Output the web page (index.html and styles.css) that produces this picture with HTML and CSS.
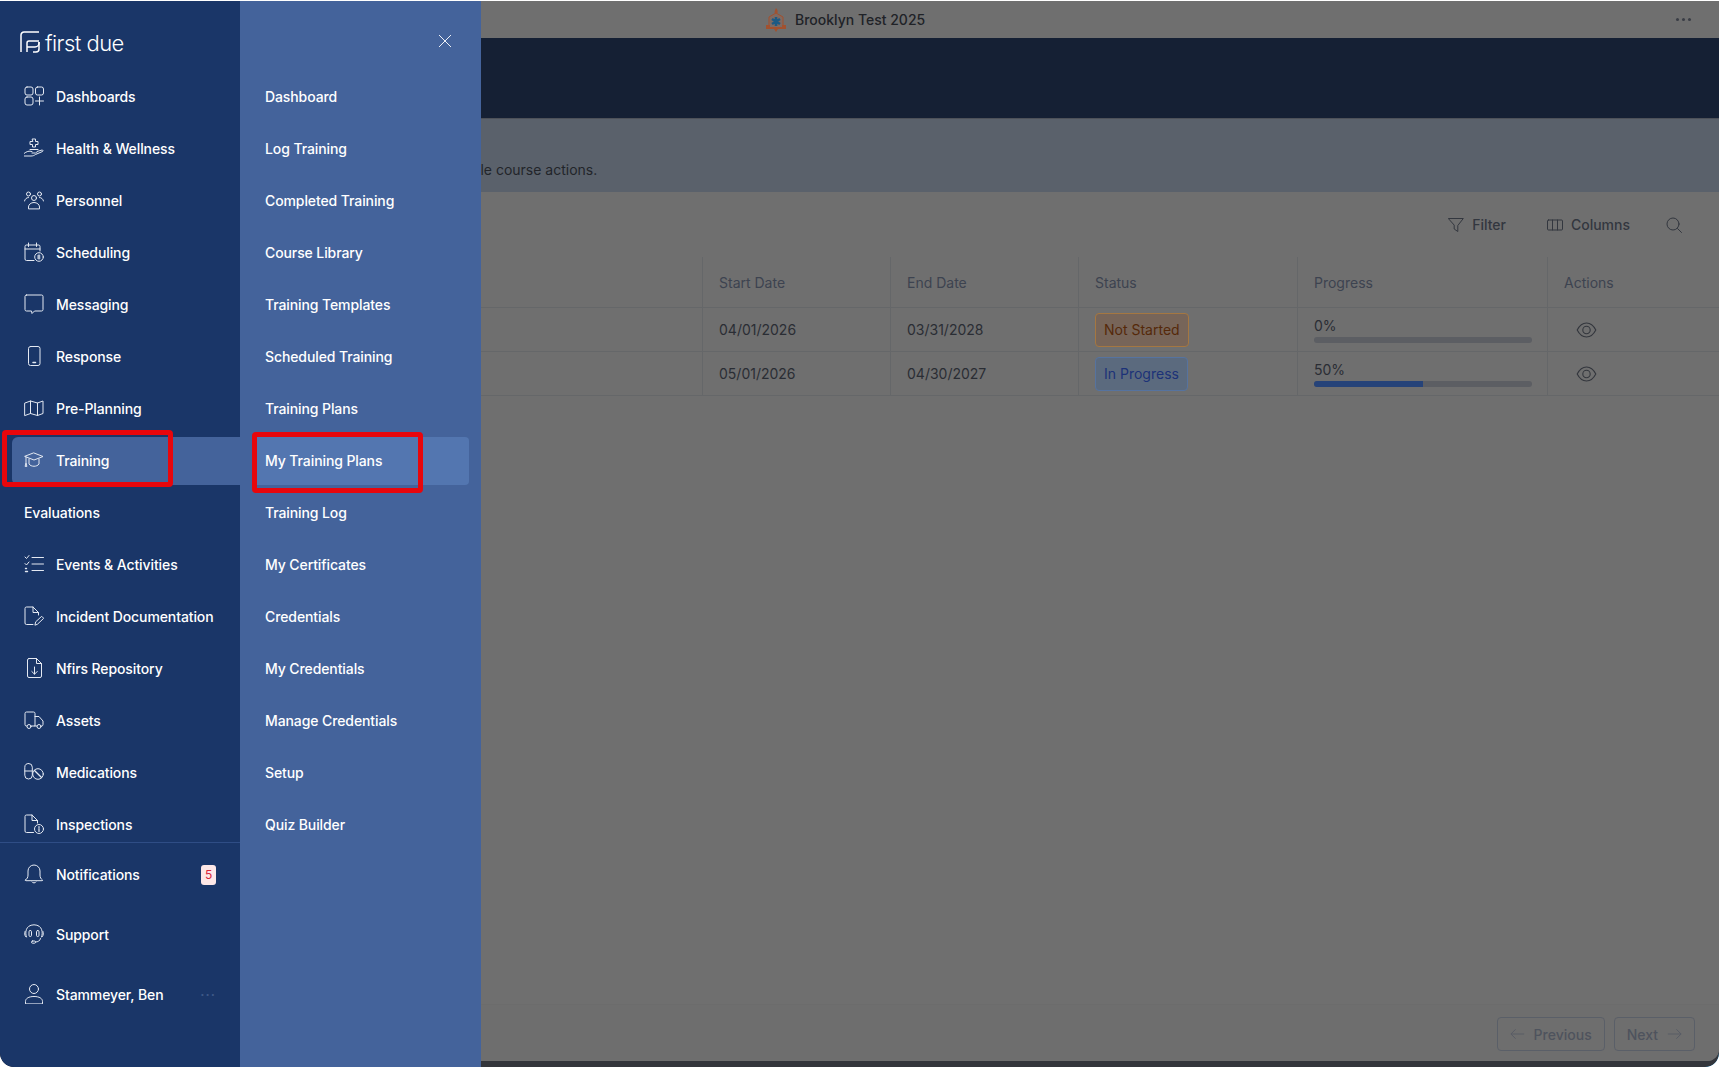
FILE: index.html
```html
<!DOCTYPE html>
<html lang="en">
<head>
    <meta charset="UTF-8">
    <meta name="viewport" content="width=device-width, initial-scale=1.0">
    <title>My Training Plans</title>
    <link rel="stylesheet" href="styles.css">
</head>
<body>
<div class="window">
    <aside class="sidebar">
        <div class="logo">
            <svg class="logo-mark" viewBox="0 0 20 22" fill="none" stroke="currentColor" stroke-width="1.5">
                <path d="M1 21V4a3 3 0 0 1 3-3h15"/>
                <path d="M7 21V12a2 2 0 0 1 2-2h10"/>
                <path d="M7 16h8a4 4 0 0 0 4-4v-1"/>
                <path d="M13 21h3a3 3 0 0 0 3-3v-7"/>
            </svg>
            <span class="logo-text">first due</span>
        </div>
        <nav class="side-nav">
            <a class="side-link">
                <svg class="icon" viewBox="0 0 20 20"><rect x="1" y="1" width="8" height="8" rx="2"/><rect x="11.5" y="1" width="8" height="8" rx="2"/><rect x="1" y="11" width="8" height="8" rx="2"/><path d="M15.5 11v8M11.5 15h8"/></svg>
                Dashboards
            </a>
            <a class="side-link">
                <svg class="icon" viewBox="0 0 20 20"><path d="M8.5 1h3v2.5H14v3h-2.500V9h-3V6.500H6v-3h2.500z"/><path d="M6 11.500h8M0 18h7c2 0 3-.5 4.500-1.500l7-3c1-.5.5-1.500-.5-1.500l-5 1.500c0 1-.5 1.500-1.500 1.500H8"/><path d="M0 15.500c2.500-2 5-3 8-2"/></svg>
                Health &amp; Wellness
            </a>
            <a class="side-link">
                <svg class="icon" viewBox="0 0 20 20"><circle cx="10" cy="8" r="2.500"/><circle cx="4.500" cy="4" r="2"/><circle cx="15.500" cy="4" r="2"/><path d="M4.500 18.500V17c0-2.500 2.500-4.500 5.500-4.500s5.500 2 5.500 4.500v1.500z"/><path d="M.5 11c.5-2 2-3.500 4-3.500M19.500 11c-.5-2-2-3.500-4-3.500"/></svg>
                Personnel
            </a>
            <a class="side-link">
                <svg class="icon" viewBox="0 0 20 20"><path d="M10 18.500H2.500a1.500 1.500 0 0 1-1.500-1.500V4.500A1.500 1.500 0 0 1 2.500 3h12A1.500 1.500 0 0 1 16 4.500V9"/><path d="M1 7h15M4.500 1v3.500M12.500 1v3.500"/><circle cx="15" cy="15" r="4.300"/><path d="M15 12.800v4.400M13.500 14h2.500M13.500 16h2.500"/></svg>
                Scheduling
            </a>
            <a class="side-link">
                <svg class="icon" viewBox="0 0 20 20"><path d="M2.500 1h15A1.500 1.500 0 0 1 19 2.500v13a1.500 1.500 0 0 1-1.500 1.500h-7l-2.500 2.500-.5-2.500h-5A1.500 1.500 0 0 1 1 15.500v-13A1.500 1.500 0 0 1 2.500 1z"/></svg>
                Messaging
            </a>
            <a class="side-link">
                <svg class="icon" viewBox="0 0 20 20"><rect x="4.500" y=".5" width="11.500" height="19" rx="2"/><path d="M9 16.500h2.500" stroke-width="1.500"/></svg>
                Response
            </a>
            <a class="side-link">
                <svg class="icon" viewBox="0 0 20 20"><path d="M1 5l5.500-2 7 2 5.500-2v12.500l-5.500 2-7-2-5.500 2z"/><path d="M6.500 3v12.500M13.500 5v12.500"/></svg>
                Pre-Planning
            </a>
            <a class="side-link active">
                <svg class="icon" viewBox="0 0 20 20"><path d="M10 3l9 3.500-9 3.500-9-3.500z"/><path d="M5 9v5c2 3 8 3 10 0V9"/><path d="M2 7v6M1.200 16l.8-3 .8 3z"/></svg>
                Training
                <span class="red-box"></span>
            </a>
            <a class="side-link">Evaluations</a>
            <a class="side-link">
                <svg class="icon" viewBox="0 0 20 20"><path d="M1 3l1.500 1.500L5 1.500M1 9.500l1.500 1.500L5 8"/><path d="M8 3.500h11.500M8 10h11.500M8 16.500h11.500"/><path d="M1.500 14.500h1M1.500 17.500h2" stroke-width="1.400"/></svg>
                Events &amp; Activities
            </a>
            <a class="side-link">
                <svg class="icon" viewBox="0 0 20 20"><path d="M9 18.500H2.500A1.500 1.500 0 0 1 1 17V2.500A1.500 1.500 0 0 1 2.500 1H9l5.500 5.500V9"/><path d="M9 1v5.500h5.500"/><path d="M11 18.800l.7-3 6-5.500 2 2-6 5.700z"/></svg>
                Incident Documentation
            </a>
            <a class="side-link">
                <svg class="icon" viewBox="0 0 20 20"><path d="M5 .5h7.500l5 5v12.500a1.500 1.500 0 0 1-1.500 1.500H5A1.500 1.500 0 0 1 3.500 18V2A1.500 1.500 0 0 1 5 .5z"/><path d="M12.500.5v5h5"/><path d="M10.500 9v7M7.800 13.500l2.700 2.700 2.700-2.700"/></svg>
                Nfirs Repository
            </a>
            <a class="side-link">
                <svg class="icon" viewBox="0 0 20 20"><path d="M3 16H2.500A1.500 1.500 0 0 1 1 14.500v-11A1.500 1.500 0 0 1 2.500 2H9.500A1.500 1.500 0 0 1 11 3.500V16H7"/><path d="M11 6.500h4l4 4.500v3.500a1.500 1.500 0 0 1-1.500 1.500H17M13 16h-2"/><circle cx="5" cy="16.500" r="2"/><circle cx="15" cy="16.500" r="2"/></svg>
                Assets
            </a>
            <a class="side-link">
                <svg class="icon" viewBox="0 0 20 20"><rect x=".8" y="1.500" width="7.500" height="15.500" rx="3.750"/><path d="M.8 9h7.500"/><circle cx="14" cy="12" r="5.300"/><path d="M10.500 8.500l7 7" stroke-width="1.400"/></svg>
                Medications
            </a>
            <a class="side-link">
                <svg class="icon" viewBox="0 0 20 20"><path d="M9.500 18.500H2.500A1.500 1.500 0 0 1 1 17V2.500A1.500 1.500 0 0 1 2.500 1H8l5.500 5.500V9"/><path d="M8 1v5.500h5.500"/><circle cx="15" cy="15" r="4.500"/><path d="M15 14.500v3M15 12.500v1" stroke-width="1.200"/></svg>
                Inspections
            </a>
        </nav>
        <div class="side-bottom">
            <a class="bottom-link">
                <svg class="icon" viewBox="0 0 20 20"><path d="M1.500 16c1.500-1 2.500-2.500 2.500-5V7a6 6 0 0 1 12 0v4c0 2.500 1 4 2.500 5a.5.5 0 0 1-.5.700H2a.5.5 0 0 1-.5-.7z"/><path d="M8 18c.5 1.300 3.500 1.300 4 0" /></svg>
                Notifications
                <span class="badge-count">5</span>
            </a>
            <a class="bottom-link">
                <svg class="icon" viewBox="0 0 20 20"><path d="M2.500 13C1 9.500 1 1 10 .8 19 1 19 9.500 17.500 13"/><path d="M1 7.500C.5 9 .5 11 1.500 12.500M19 7.500c.5 1.500.5 3.500-.5 5"/><rect x="5" y="6.500" width="2.500" height="6" rx="1.200"/><rect x="12.500" y="6.500" width="2.500" height="6" rx="1.200"/><path d="M16.500 14.500c-.5 2.500-2.500 3.500-5 3.500"/><rect x="7.500" y="17" width="4" height="2.200" rx="1"/></svg>
                Support
            </a>
            <a class="bottom-link">
                <svg class="icon" viewBox="0 0 20 20"><circle cx="10" cy="5" r="4.500"/><path d="M1.500 19.500v-2c0-3 3-5 8.500-5s8.500 2 8.500 5v2z"/></svg>
                Stammeyer, Ben
                <span class="more-dots">&middot;&middot;&middot;</span>
            </a>
        </div>
    </aside>

    <div class="main-frame">
        <main class="main">
            <header class="topbar">
                <svg class="brand-mark" viewBox="0 0 22 24">
                    <path d="M11 0c2 2 2 4 1 6h-2C9 4 10 2 11 0z" fill="#a2512f"/>
                    <path d="M11 5l7 4v11H4V9z" fill="#7f6a62" stroke="#a2512f" stroke-width="1"/>
                    <path d="M1 17h4v2h12v-2h4v4H1z" fill="#a2512f"/>
                    <path d="M11 9v9M7 11l8 5M15 11l-8 5" stroke="#1d5a84" stroke-width="2.600"/>
                    <path d="M9 21h4l-2 3z" fill="#a2512f"/>
                </svg>
                <span class="brand-name">Brooklyn Test 2025</span>
                <span class="top-dots"><i></i><i></i><i></i></span>
            </header>
            <div class="page-head"></div>
            <div class="banner">
                <p>Track progress and access available course actions.</p>
            </div>
            <div class="toolbar">
                <a class="tool">
                    <svg class="tool-icon" viewBox="0 0 16 16"><path d="M.7 1.500h14.600L9.800 8.500v6L6.200 12V8.500z"/></svg>
                    Filter
                </a>
                <a class="tool">
                    <svg class="tool-icon" viewBox="0 0 16 16"><rect x=".5" y="3" width="15" height="10" rx="1"/><path d="M5.500 3v10M10.500 3v10"/></svg>
                    Columns
                </a>
                <svg class="tool-icon search" viewBox="0 0 16 16"><circle cx="7" cy="7" r="6"/><path d="M11.500 11.500l4 4"/></svg>
            </div>
            <div class="table-wrap">
                <table class="plans">
                    <colgroup>
                        <col class="col-name"><col class="col-start"><col class="col-end"><col class="col-status"><col class="col-progress"><col>
                    </colgroup>
                    <thead>
                        <tr>
                            <th></th>
                            <th>Start Date</th>
                            <th>End Date</th>
                            <th>Status</th>
                            <th>Progress</th>
                            <th>Actions</th>
                        </tr>
                    </thead>
                    <tbody>
                        <tr>
                            <td></td>
                            <td>04/01/2026</td>
                            <td>03/31/2028</td>
                            <td><span class="status not-started">Not Started</span></td>
                            <td>
                                <div class="pct">0%</div>
                                <div class="track"><div class="fill" style="width: 0%"></div></div>
                            </td>
                            <td><svg class="eye" viewBox="0 0 20 16"><path d="M.7 8C3 3.500 6.500 1 10 1s7 2.500 9.300 7c-2.300 4.500-5.800 7-9.300 7S3 12.500.7 8z"/><circle cx="10" cy="8" r="3.700"/></svg></td>
                        </tr>
                        <tr>
                            <td></td>
                            <td>05/01/2026</td>
                            <td>04/30/2027</td>
                            <td><span class="status in-progress">In Progress</span></td>
                            <td>
                                <div class="pct">50%</div>
                                <div class="track"><div class="fill" style="width: 50%"></div></div>
                            </td>
                            <td><svg class="eye" viewBox="0 0 20 16"><path d="M.7 8C3 3.500 6.500 1 10 1s7 2.500 9.300 7c-2.300 4.500-5.800 7-9.300 7S3 12.500.7 8z"/><circle cx="10" cy="8" r="3.700"/></svg></td>
                        </tr>
                    </tbody>
                </table>
            </div>
            <footer class="pager">
                <a class="page-btn">
                    <svg class="arrow" viewBox="0 0 16 12"><path d="M15 6H1M6 1L1 6l5 5"/></svg>
                    Previous
                </a>
                <a class="page-btn">
                    Next
                    <svg class="arrow" viewBox="0 0 16 12"><path d="M1 6h14M10 1l5 5-5 5"/></svg>
                </a>
            </footer>
        </main>
    </div>

    <div class="flyout">
        <button class="close-btn" aria-label="Close">
            <svg viewBox="0 0 14 14"><path d="M1 1l12 12M13 1L1 13"/></svg>
        </button>
        <nav class="fly-nav">
            <a class="fly-link">Dashboard</a>
            <a class="fly-link">Log Training</a>
            <a class="fly-link">Completed Training</a>
            <a class="fly-link">Course Library</a>
            <a class="fly-link">Training Templates</a>
            <a class="fly-link">Scheduled Training</a>
            <a class="fly-link">Training Plans</a>
            <a class="fly-link active">My Training Plans<span class="red-box"></span></a>
            <a class="fly-link">Training Log</a>
            <a class="fly-link">My Certificates</a>
            <a class="fly-link">Credentials</a>
            <a class="fly-link">My Credentials</a>
            <a class="fly-link">Manage Credentials</a>
            <a class="fly-link">Setup</a>
            <a class="fly-link">Quiz Builder</a>
        </nav>
    </div>
</div>
</body>
</html>
```
FILE: styles.css
```css
* {
    box-sizing: border-box;
}
body {
    margin: 0;
    background: #fff;
    font-family: Inter, "Noto Sans", sans-serif;
    font-size: 14px;
    overflow: hidden;
}
.window {
    position: relative;
    display: flex;
    width: 1719px;
    height: 1066px;
    margin-top: 1px;
    background: linear-gradient(90deg, #10192c 50%, #2b86bd 50%);
    border-radius: 0 0 14px 14px;
    overflow: hidden;
}

/* left rail */
.sidebar {
    width: 240px;
    flex: none;
    display: flex;
    flex-direction: column;
    background: #1a3668;
    border-radius: 0 0 0 14px;
    color: #fff;
}
.logo {
    height: 72px;
    padding: 30px 0 0 20px;
    display: flex;
    align-items: flex-start;
    gap: 5px;
}
.logo-mark {
    width: 20px;
    height: 22px;
}
.logo-text {
    font-size: 22px;
    font-weight: 300;
    line-height: 24px;
    letter-spacing: -0.55px;
}
.side-nav {
    height: 769px;
    padding-left: 12px;
    overflow: hidden;
    display: flex;
    flex-direction: column;
    gap: 4px;
    flex: none;
}
.side-link {
    position: relative;
    flex: none;
    height: 48px;
    padding: 0 0 2px 12px;
    display: flex;
    align-items: center;
    gap: 12px;
    font-weight: 500;
    letter-spacing: -0.1px;
}
.side-link.active {
    background: #44639b;
    border-radius: 6px 0 0 6px;
}
.icon {
    width: 20px;
    height: 20px;
    flex: none;
    fill: none;
    stroke: #e4e9f2;
    stroke-width: 1;
    stroke-linecap: round;
    stroke-linejoin: round;
}
.side-bottom {
    border-top: 1px solid #2f4d85;
    padding-top: 1px;
}
.bottom-link {
    height: 60px;
    padding-left: 24px;
    display: flex;
    align-items: center;
    gap: 12px;
    font-weight: 500;
    letter-spacing: -0.1px;
}
.badge-count {
    margin: 2px 24px 0 auto;
    width: 15px;
    height: 20px;
    border-radius: 3px;
    background: #fde8e8;
    color: #d9263c;
    font-size: 12px;
    font-weight: 400;
    line-height: 20px;
    text-align: center;
}
.more-dots {
    margin-left: auto;
    margin-right: 24px;
    color: #3f5a88;
    font-size: 14px;
    letter-spacing: 1px;
}
.red-box {
    position: absolute;
    border: 5px solid #e8060c;
    border-radius: 4px;
}
.side-link .red-box {
    left: -10px;
    top: -7px;
    width: 171px;
    height: 57px;
}

/* page behind the scrim */
.main-frame {
    flex: 1;
    min-width: 0;
    background: #33353b;
    border-radius: 0 0 14px 0;
    padding-bottom: 6px;
}
.main {
    height: 100%;
    display: flex;
    flex-direction: column;
    background: #6f6f6f;
    border-radius: 0 0 12px 0;
    overflow: hidden;
}
.topbar {
    position: relative;
    height: 37px;
    flex: none;
    padding-left: 525px;
    display: flex;
    align-items: center;
    gap: 8px;
    color: #202227;
}
.brand-mark {
    width: 22px;
    height: 24px;
}
.brand-name {
    font-weight: 500;
}
.top-dots {
    margin-left: auto;
    margin-right: 28px;
    display: flex;
    gap: 3px;
}
.top-dots i {
    width: 3px;
    height: 3px;
    border-radius: 50%;
    background: #3a3d45;
}
.page-head {
    height: 81px;
    flex: none;
    background: #152034;
    border-bottom: 1px solid #4d5159;
}
.banner {
    height: 73px;
    flex: none;
    background: #5a616b;
    color: #22252a;
    padding: 42px 0 0 11px;
}
.banner p {
    margin: 0;
    line-height: 17px;
}
.toolbar {
    height: 65px;
    flex: none;
    padding-right: 37px;
    display: flex;
    justify-content: flex-end;
    align-items: center;
    gap: 41px;
}
.tool {
    display: flex;
    align-items: center;
    gap: 8px;
    color: #33373f;
    font-weight: 500;
}
.tool-icon {
    width: 16px;
    height: 16px;
    fill: none;
    stroke: #33373f;
    stroke-width: 1;
    stroke-linejoin: round;
    stroke-linecap: round;
}
.tool-icon.search {
    margin-left: -5px;
}
.table-wrap {
    flex: 1;
}
.plans {
    width: 100%;
    table-layout: fixed;
    border-collapse: separate;
    border-spacing: 0;
}
.col-name { width: 462px; }
.col-start { width: 188px; }
.col-end { width: 188px; }
.col-status { width: 219px; }
.col-progress { width: 250px; }
.plans th, .plans td {
    padding: 0 16px;
    border-bottom: 1px solid #656769;
    border-left: 1px solid #656769;
    text-align: left;
}
.plans th {
    height: 51px;
    font-weight: 400;
    color: #3d4350;
}
.plans td {
    height: 44px;
    color: #2a2d34;
}
.status {
    display: inline-block;
    height: 34px;
    padding: 0 8px;
    border: 1px solid;
    border-radius: 4px;
    line-height: 32px;
    vertical-align: middle;
}
.not-started {
    background: #776559;
    border-color: #a57741;
    color: #55290a;
}
.in-progress {
    background: #5b6a7e;
    border-color: #56739f;
    color: #1c3278;
}
.pct {
    line-height: 16px;
    margin-top: 2px;
}
.track {
    height: 6px;
    margin-top: 3px;
    width: 218px;
    border-radius: 3px;
    background: #5c5e63;
    overflow: hidden;
}
.fill {
    height: 100%;
    background: #264379;
}
.eye {
    display: block;
    width: 21px;
    height: 16px;
    margin-left: 12px;
    fill: none;
    stroke: #33363d;
    stroke-width: 1.1;
}
.pager {
    height: 57px;
    flex: none;
    padding: 12px 24px 0 0;
    border-top: 1px solid #6c6c6c;
    background: #6e6e6e;
    display: flex;
    justify-content: flex-end;
    gap: 9px;
}
.page-btn {
    height: 34px;
    padding: 0 12px;
    display: flex;
    align-items: center;
    gap: 9px;
    border: 1px solid #5a5f68;
    border-radius: 4px;
    color: #4e535d;
    font-weight: 500;
}
.arrow {
    width: 15px;
    height: 12px;
    fill: none;
    stroke: #575c65;
    stroke-width: 1;
}

/* submenu */
.flyout {
    position: absolute;
    left: 240px;
    top: 0;
    bottom: 0;
    width: 241px;
    background: #44639b;
    color: #fff;
}
.close-btn {
    position: absolute;
    left: 198px;
    top: 33px;
    width: 14px;
    height: 14px;
    padding: 0;
    border: none;
    background: none;
}
.close-btn svg {
    display: block;
    fill: none;
    stroke: #eef1f7;
    stroke-width: 1;
}
.fly-nav {
    padding: 72px 12px 0;
    display: flex;
    flex-direction: column;
    gap: 4px;
}
.fly-link {
    position: relative;
    height: 48px;
    padding: 0 0 2px 13px;
    display: flex;
    align-items: center;
    font-weight: 500;
    letter-spacing: -0.1px;
}
.fly-link.active {
    background: #5376b0;
    border-radius: 4px;
}
.fly-link .red-box {
    left: 0;
    top: -5px;
    width: 171px;
    height: 61px;
}
```
